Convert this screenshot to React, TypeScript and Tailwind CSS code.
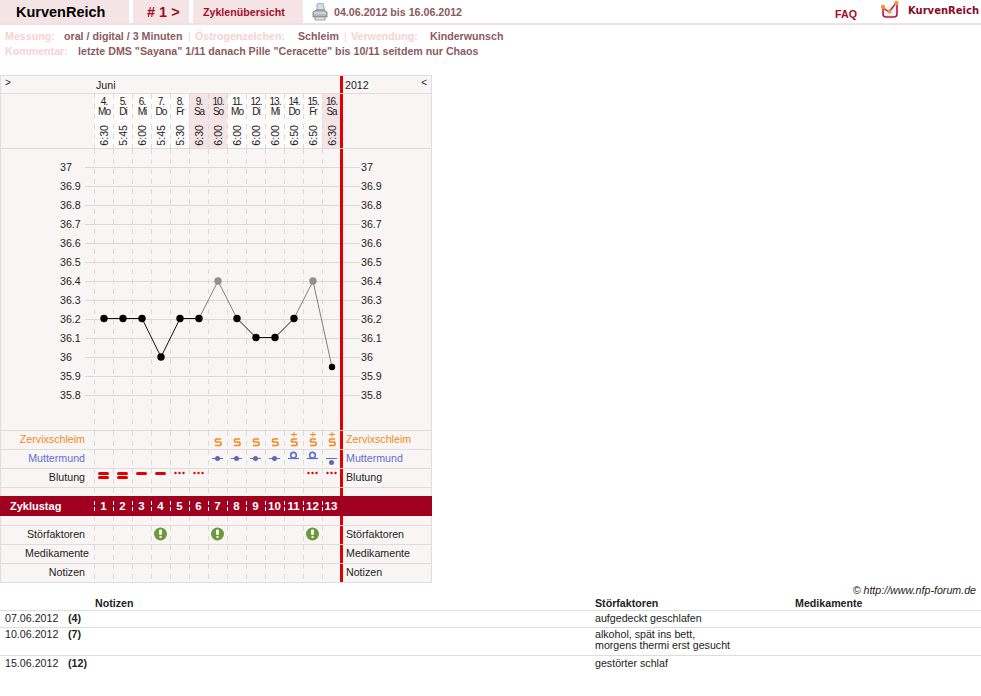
import type { ReactNode } from "react";

const days = [
  { n: "4.", d: "Mo", t: "6:30" },
  { n: "5.", d: "Di", t: "5:45" },
  { n: "6.", d: "Mi", t: "6:00" },
  { n: "7.", d: "Do", t: "5:45" },
  { n: "8.", d: "Fr", t: "5:30" },
  { n: "9.", d: "Sa", t: "6:30", we: true },
  { n: "10.", d: "So", t: "6:00", we: true },
  { n: "11.", d: "Mo", t: "6:00" },
  { n: "12.", d: "Di", t: "6:00" },
  { n: "13.", d: "Mi", t: "6:00" },
  { n: "14.", d: "Do", t: "6:50" },
  { n: "15.", d: "Fr", t: "6:50" },
  { n: "16.", d: "Sa", t: "6:30", we: true },
];

const scale = ["37", "36.9", "36.8", "36.7", "36.6", "36.5", "36.4", "36.3", "36.2", "36.1", "36", "35.9", "35.8"];

// y in plot coordinates, plot starts at page y=149
const temps = [169.5, 169.5, 169.5, 208, 169.5, 169.5, 132, 169.5, 188.5, 188.5, 169.5, 132, 218];
const grey = [6, 11];

const dash = "bg-[linear-gradient(#dddada_50%,transparent_50%)] bg-[length:1px_10px] bg-repeat-y";
const whiteDash = "bg-[linear-gradient(#ffffff_66%,transparent_66%)] bg-[length:1px_6px] bg-[position:0_5px] bg-repeat-y bg-clip-content";

function cellBox(i: number) {
  return i === 12 ? "w-[18px]" : "w-[19px]";
}

function Slime({ plus }: { plus?: boolean }) {
  return (
    <svg width="19" height="18" className="block">
      {plus && <path d="M7 3.5h6M10 1v5" stroke="#f08a1c" strokeWidth="1" fill="none" />}
      <path d="M13 8H8.5Q7.5 8 7.5 9V10Q7.5 11 8.5 11H12Q13 11 13 12V13.2Q13 14.5 12 14.5H7" stroke="#f08a1c" strokeWidth="1.7" fill="none" />
    </svg>
  );
}

function Cervix({ kind }: { kind: "mid" | "open" | "low" }) {
  if (kind === "open") {
    return (
      <svg width="19" height="18" className="block">
        <path d="M4 8.5h11" stroke="#5a70d0" strokeWidth="1.2" />
        <circle cx="9.5" cy="5.2" r="2.8" stroke="#5a70d0" strokeWidth="1.6" fill="none" />
      </svg>
    );
  }
  if (kind === "low") {
    return (
      <svg width="19" height="18" className="block">
        <path d="M4 8.5h11" stroke="#5a70d0" strokeWidth="1" />
        <circle cx="9.5" cy="12.5" r="2.5" fill="#5e6ba8" />
      </svg>
    );
  }
  return (
    <svg width="19" height="18" className="block">
      <path d="M4 8.5h11" stroke="#5a70d0" strokeWidth="1" />
      <circle cx="9.5" cy="8.5" r="2.5" fill="#5e6ba8" />
    </svg>
  );
}

function Bleed({ level }: { level: 1 | 2 | 3 }) {
  return (
    <svg width="19" height="18" className="block">
      {level === 3 && (
        <>
          <rect x="4" y="3" width="11" height="3" rx="1.5" fill="#e00000" />
          <rect x="4" y="7" width="11" height="3" rx="1.5" fill="#e00000" />
        </>
      )}
      {level === 2 && <rect x="4" y="3" width="11" height="3" rx="1.5" fill="#e00000" />}
      {level === 1 && (
        <>
          <circle cx="5.5" cy="4" r="1.2" fill="#e00000" />
          <circle cx="9.5" cy="4" r="1.2" fill="#e00000" />
          <circle cx="13.5" cy="4" r="1.2" fill="#e00000" />
        </>
      )}
    </svg>
  );
}

function Alert() {
  return (
    <svg width="19" height="18" className="block">
      <circle cx="9.5" cy="8" r="6.5" fill="#6a9a3a" />
      <rect x="8" y="3.5" width="3" height="5.5" rx="1.3" fill="#ffffff" />
      <rect x="8.3" y="10" width="2.4" height="2" rx="1" fill="#ffffff" />
    </svg>
  );
}

function Row({
  label,
  cells,
  color = "text-[#222222]",
  pr = "pr-[9px]",
}: {
  label: string;
  cells?: Record<number, ReactNode>;
  color?: string;
  pr?: string;
}) {
  return (
    <div className="flex h-[19px] border-b border-[#e0dcdc]">
      <div className={`w-[93px] text-right leading-[17px] ${pr} ${color}`}>{label}</div>
      <div className="flex w-[246px]">
        {days.map((_, i) => (
          <div key={i} className={`${cellBox(i)} ${dash}`}>
            {cells?.[i]}
          </div>
        ))}
      </div>
      <div className="w-[3px] bg-[#e00000]" />
      <div className={`flex-1 pl-[3px] leading-[17px] ${color}`}>{label}</div>
    </div>
  );
}

function Spacer({ h, border }: { h: string; border?: boolean }) {
  return (
    <div className={`flex ${h} ${border ? "border-b border-[#e0dcdc]" : ""}`}>
      <div className="w-[93px]" />
      <div className="flex w-[246px]">
        {days.map((_, i) => (
          <div key={i} className={`${cellBox(i)} ${dash}`} />
        ))}
      </div>
      <div className="w-[3px] bg-[#e00000]" />
    </div>
  );
}

function Plot() {
  return (
    <div className="flex h-[282px] border-b border-[#e0dcdc]">
      <svg width="339" height="281" className="block">
        {days.map((_, i) => (
          <line key={i} x1={93.5 + 19 * i} x2={93.5 + 19 * i} y1="0" y2="281" stroke="#dddada" strokeDasharray="5 5" />
        ))}
        {scale.map((s, i) => (
          <g key={s}>
            <line x1="84" x2="339" y1={18.5 + 19 * i} y2={18.5 + 19 * i} stroke="#dcd8d8" />
            <text x="59" y={22 + 19 * i} fontSize="10.67" fill="#222222">
              {s}
            </text>
          </g>
        ))}
        {temps.slice(1).map((y, i) => (
          <line
            key={i}
            x1={103 + 19 * i}
            y1={temps[i]}
            x2={103 + 19 * (i + 1)}
            y2={y}
            stroke={grey.includes(i) || grey.includes(i + 1) ? "#808080" : "#111111"}
          />
        ))}
        {temps.map((y, i) => (
          <circle key={i} cx={103 + 19 * i} cy={y} r={i === 12 ? 3.2 : 3.7} fill={grey.includes(i) ? "#909090" : "#000000"} />
        ))}
      </svg>
      <div className="w-[3px] bg-[#e00000]" />
      <svg width="88" height="281" className="block">
        {scale.map((s, i) => (
          <g key={s}>
            <line x1="0" x2="17" y1={18.5 + 19 * i} y2={18.5 + 19 * i} stroke="#dcd8d8" />
            <text x="18" y={22 + 19 * i} fontSize="10.67" fill="#222222">
              {s}
            </text>
          </g>
        ))}
      </svg>
    </div>
  );
}

function Printer() {
  return (
    <svg width="16" height="18" viewBox="0 0 16 18" className="block">
      <path d="M5 1l6-1 1.500 7H5z" fill="#cfe0f0" stroke="#8a9aa8" strokeWidth="0.8" />
      <path d="M1 9l3-2h8l3 2v5H1z" fill="#b4b8bc" stroke="#777777" strokeWidth="0.8" />
      <path d="M3 14h10v3H3z" fill="#e4e4e4" stroke="#888888" strokeWidth="0.8" />
      <path d="M2 10h12" stroke="#e8e8e8" />
    </svg>
  );
}

function Logo() {
  return (
    <svg width="20" height="19" viewBox="0 0 20 19" className="block">
      <path d="M3 8v6q0 3 3 3h8q3 0 3-3V5" fill="#fbeef2" stroke="#b3124e" strokeWidth="1.6" />
      <path d="M2 7l7 5 7-9" fill="none" stroke="#b3124e" strokeWidth="1.3" />
      <circle cx="3" cy="7" r="2.2" fill="#f09a20" />
      <circle cx="9.5" cy="11.5" r="2" fill="#f09a20" />
      <circle cx="16.5" cy="3" r="2.2" fill="#f09a20" />
    </svg>
  );
}

export default function App() {
  const slime: Record<number, ReactNode> = {
    6: <Slime />, 7: <Slime />, 8: <Slime />, 9: <Slime />,
    10: <Slime plus />, 11: <Slime plus />, 12: <Slime plus />,
  };
  const cervix: Record<number, ReactNode> = {
    6: <Cervix kind="mid" />, 7: <Cervix kind="mid" />, 8: <Cervix kind="mid" />, 9: <Cervix kind="mid" />,
    10: <Cervix kind="open" />, 11: <Cervix kind="open" />, 12: <Cervix kind="low" />,
  };
  const bleed: Record<number, ReactNode> = {
    0: <Bleed level={3} />, 1: <Bleed level={3} />, 2: <Bleed level={2} />, 3: <Bleed level={2} />,
    4: <Bleed level={1} />, 5: <Bleed level={1} />, 11: <Bleed level={1} />, 12: <Bleed level={1} />,
  };
  const alerts: Record<number, ReactNode> = { 3: <Alert />, 6: <Alert />, 11: <Alert /> };

  return (
    <div className="w-[981px] min-h-[696px] bg-white font-['Liberation_Sans',Arial,sans-serif] text-[10.67px] text-[#222222]">
      {/* top bar */}
      <div className="flex h-[25px] items-stretch border-b-2 border-[#f3e0e2]">
        <div className="w-[129px] bg-[#f5e4e6] pl-[16px] text-[14.5px] font-bold leading-[25px] text-black">KurvenReich</div>
        <div className="ml-[4px] w-[56px] bg-[#f5e4e6] pl-[14px] text-[14.5px] font-bold leading-[25px] text-[#a50a28]">
          # 1 &gt;
        </div>
        <div className="ml-[4px] w-[110px] bg-[#f5e4e6] pl-[10px] font-bold leading-[24px] text-[#a50a28]">Zyklenübersicht</div>
        <div className="ml-[9px] pt-[3px]">
          <Printer />
        </div>
        <div className="ml-[6px] font-bold leading-[24px] text-[#8b5a60]">04.06.2012 bis 16.06.2012</div>
        <div className="ml-auto pt-[2px] font-bold leading-[24px] text-[#a50a28]">FAQ</div>
        <div className="ml-[23px]">
          <Logo />
        </div>
        <div className="ml-[8px] w-[73px] whitespace-nowrap pt-[4px] font-['DejaVu_Sans',sans-serif] text-[10px] font-bold leading-[14px] text-[#8a0a28]">
          KurvenReich
        </div>
      </div>

      {/* meta lines */}
      <div className="h-[50px] pl-[5px] pt-[4px] font-bold leading-[15px] text-[#8b5a60]">
        <div className="flex">
          <span className="w-[59px] text-[#f9d0d4]">Messung:</span>
          <span className="w-[124px]">oral / digital / 3 Minuten</span>
          <span className="w-[7px] font-normal text-[#f9d0d4]">|</span>
          <span className="w-[103px] text-[#f9d0d4]">Östrogenzeichen:</span>
          <span className="w-[46px]">Schleim</span>
          <span className="w-[7px] font-normal text-[#f9d0d4]">|</span>
          <span className="w-[79px] text-[#f9d0d4]">Verwendung:</span>
          <span>Kinderwunsch</span>
        </div>
        <div className="flex">
          <span className="w-[73px] text-[#f9d0d4]">Kommentar:</span>
          <span>letzte DMS "Sayana" 1/11 danach Pille "Ceracette" bis 10/11 seitdem nur Chaos</span>
        </div>
      </div>

      {/* chart box */}
      <div className="w-[432px] border border-[#e0dcdc] bg-[#faf5f5]">
        <div className="flex h-[18px] border-b border-[#e0dcdc]">
          <div className="w-[93px] pl-[4px] text-[10px] leading-[14px]">&gt;</div>
          <div className="w-[246px] pl-[2px] leading-[18px]">Juni</div>
          <div className="w-[3px] bg-[#e00000]" />
          <div className="flex flex-1 justify-between pl-[2px] pr-[4px] leading-[18px]">
            <span>2012</span>
            <span className="text-[10px] leading-[14px]">&lt;</span>
          </div>
        </div>
        <div className="flex h-[55px] border-b border-[#e0dcdc]">
          <div className="w-[93px]" />
          <div className="flex w-[246px]">
            {days.map((d, i) => (
              <div
                key={i}
                className={`flex ${cellBox(i)} flex-col items-center pl-[1px] ${d.we ? "bg-[#f5e4e6]" : "bg-[#fdfafa]"} ${dash}`}
              >
                <div className="mt-[3px] text-center text-[10px] leading-[10px] tracking-[-1px]">
                  {d.n}
                  <br />
                  {d.d}
                </div>
                <div className="mt-[8px] rotate-180 leading-[12px] [writing-mode:vertical-rl]">{d.t}</div>
              </div>
            ))}
          </div>
          <div className="w-[3px] bg-[#e00000]" />
        </div>
        <Plot />
        <Row label="Zervixschleim" color="text-[#f08a1c]" cells={slime} />
        <Row label="Muttermund" color="text-[#5a70d0]" cells={cervix} />
        <Row label="Blutung" cells={bleed} />
        <Spacer h="h-[8px]" />
        <div className="-mx-px flex h-[20px] bg-[#a00020] font-bold text-white">
          <div className="w-[94px] pl-[10px] text-[11px] leading-[20px]">Zyklustag</div>
          <div className="flex w-[246px] text-[11.5px]">
            {days.map((_, i) => (
              <div key={i} className={`${cellBox(i)} py-[5px] text-center leading-[10px] ${whiteDash}`}>
                {i + 1}
              </div>
            ))}
          </div>
        </div>
        <Spacer h="h-[10px]" border />
        <Row label="Störfaktoren" cells={alerts} />
        <Row label="Medikamente" pr="pr-[5px]" />
        <div className="-mb-px">
          <Row label="Notizen" />
        </div>
      </div>

      {/* notes table */}
      <div className="mt-[1px] pr-[5px] text-right text-[10.67px] italic leading-[13px]">© http://www.nfp-forum.de</div>
      <div className="grid grid-cols-[95px_500px_200px_186px] border-b border-[#dddddd] font-bold leading-[13px]">
        <div />
        <div>Notizen</div>
        <div>Störfaktoren</div>
        <div>Medikamente</div>
      </div>
      <div className="grid h-[17px] grid-cols-[95px_500px_386px] border-b border-[#dddddd] pt-[1px] leading-[12px]">
        <div className="flex pl-[5px]">
          <span className="w-[63px]">07.06.2012</span>
          <b>(4)</b>
        </div>
        <div />
        <div>aufgedeckt geschlafen</div>
      </div>
      <div className="grid h-[28px] grid-cols-[95px_500px_386px] border-b border-[#dddddd] pt-[1px] leading-[11px]">
        <div className="flex pl-[5px]">
          <span className="w-[63px]">10.06.2012</span>
          <b>(7)</b>
        </div>
        <div />
        <div>
          alkohol, spät ins bett,
          <br />
          morgens thermi erst gesucht
        </div>
      </div>
      <div className="grid h-[17px] grid-cols-[95px_500px_386px] pt-[1px] leading-[12px]">
        <div className="flex pl-[5px]">
          <span className="w-[63px]">15.06.2012</span>
          <b>(12)</b>
        </div>
        <div />
        <div>gestörter schlaf</div>
      </div>
    </div>
  );
}
